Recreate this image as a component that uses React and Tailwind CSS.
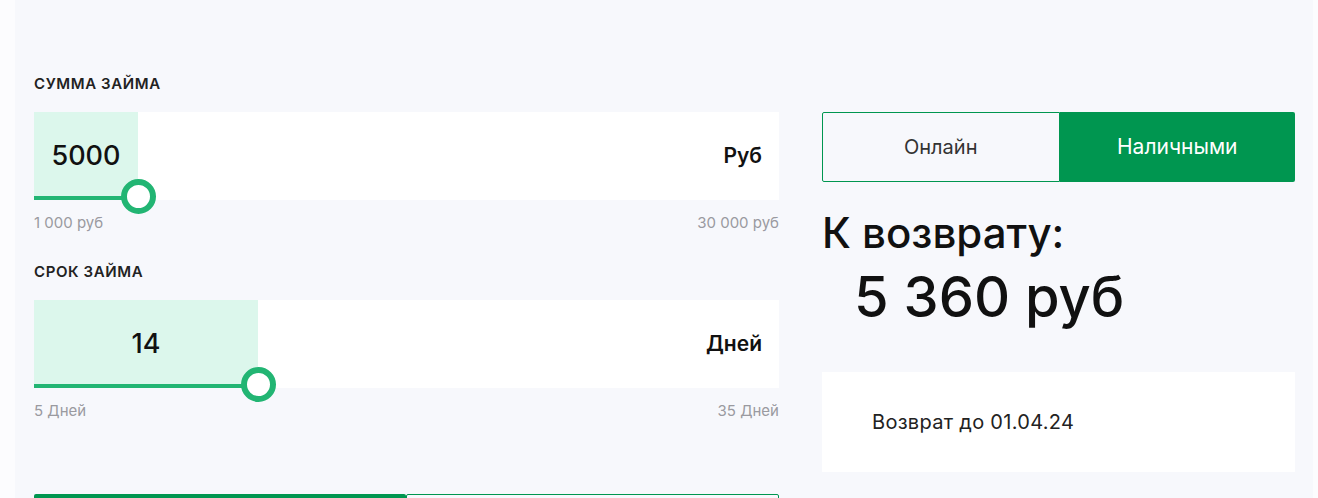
const font = { fontFamily: '"Inter", "Liberation Sans", sans-serif' };

function Slider({ value, unit, fill, min, max }) {
    return (
        <div>
            <div className="relative h-[88px] bg-white flex items-center">
                <div className="absolute left-0 top-0 bottom-0 bg-[#dcf7ec]" style={{ width: fill }} />
                <div className="absolute left-0 bottom-0 h-[4px] bg-[#22b573]" style={{ width: fill }} />
                <div
                    className="absolute bottom-[-14px] w-[35px] h-[35px] rounded-full border-[6px] border-[#22b573] bg-white"
                    style={{ left: fill - 17 }}
                />
                <div className="relative text-[27px] text-[#111] text-center font-medium" style={{ width: fill }}>
                    {value}
                </div>
                <div className="relative ml-auto pr-[17px] text-[21px] font-semibold text-[#111]">{unit}</div>
            </div>
            <div className="flex justify-between mt-[13px] text-[15px] leading-5 text-[#9a9aa0]">
                <span>{min}</span>
                <span>{max}</span>
            </div>
        </div>
    );
}

export default function App() {
    return (
        <div className="h-[498px] overflow-hidden bg-[#fcfcfe] pl-[15px] pr-[5px]" style={font}>
            <div className="h-full bg-[#f7f8fc] pt-[74px] pl-[19px] pr-[18px] flex gap-[43px]">
                <div className="w-[745px] shrink-0">
                    <p className="text-[15px] leading-5 font-semibold text-[#222] tracking-[0.6px] mb-[18px]">СУММА ЗАЙМА</p>
                    <Slider value="5000" unit="Руб" fill={104} min="1 000 руб" max="30 000 руб" />
                    <p className="text-[15px] leading-5 font-semibold text-[#222] tracking-[0.6px] mt-[29px] mb-[18px]">СРОК ЗАЙМА</p>
                    <Slider value="14" unit="Дней" fill={224} min="5 Дней" max="35 Дней" />
                    <div className="flex mt-[73px]">
                        <div className="w-[372px] h-[50px] bg-[#009650] rounded-[2px]" />
                        <div className="flex-1 h-[50px] border border-[#009650] rounded-[2px]" />
                    </div>
                </div>
                <div className="flex-1 pt-[38px]">
                    <div className="flex h-[70px]">
                        <button className="flex-1 border border-[#009650] rounded-l-[2px] text-[20px] text-[#333]">
                            Онлайн
                        </button>
                        <button className="flex-1 bg-[#009650] rounded-r-[2px] text-[21px] text-white">
                            Наличными
                        </button>
                    </div>
                    <p className="mt-[27px] text-[42px] leading-[48px] font-medium text-[#111]">К возврату:</p>
                    <p className="pl-[32px] mt-[6px] text-[56px] leading-[68px] font-medium text-[#111]">5 360 руб</p>
                    <div className="mt-[41px] h-[100px] bg-white flex items-center pl-[50px] text-[20px] text-[#222] tracking-[0.3px]">
                        Возврат до 01.04.24
                    </div>
                </div>
            </div>
        </div>
    );
}
